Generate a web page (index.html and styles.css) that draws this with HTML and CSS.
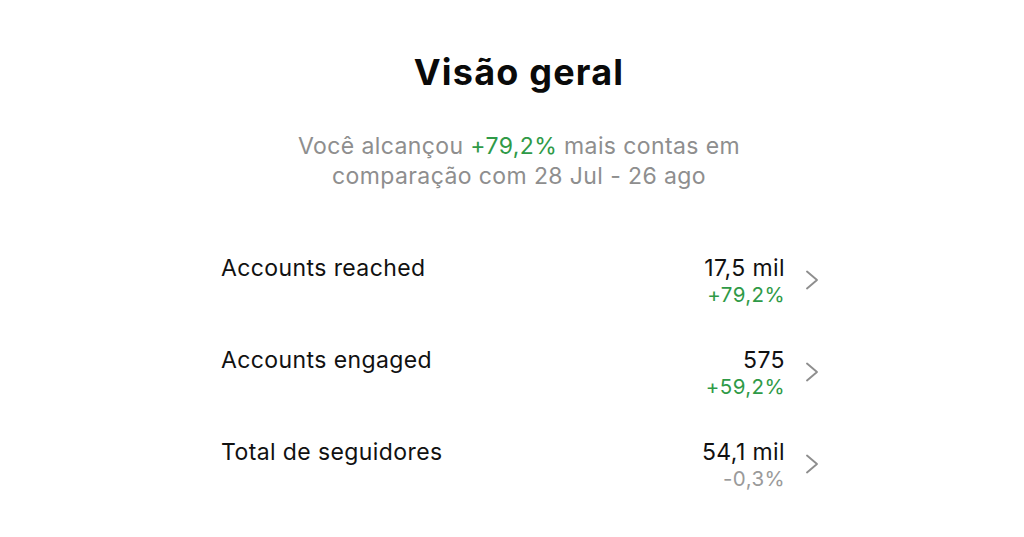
FILE: index.html
```html
<!DOCTYPE html>
<html lang="pt">
<head>
<meta charset="utf-8">
<link rel="stylesheet" href="styles.css">
</head>
<body>
<main class="page">
  <h1 class="title">Visão geral</h1>
  <p class="subtitle">Você alcançou <span class="up">+79,2%</span> mais contas em<br>comparação com 28 Jul - 26 ago</p>
  <ul class="list">
    <li class="row">
      <span class="label">Accounts reached</span>
      <span class="vals"><span class="value">17,5 mil</span><span class="delta up">+79,2%</span></span>
      <svg class="chev" viewBox="0 0 14 20" width="14" height="20"><path d="M2 1.5 L12 10 L2 18.5" fill="none" stroke="#8e8e8e" stroke-width="1.9" stroke-linecap="round" stroke-linejoin="round"/></svg>
    </li>
    <li class="row">
      <span class="label">Accounts engaged</span>
      <span class="vals"><span class="value">575</span><span class="delta up">+59,2%</span></span>
      <svg class="chev" viewBox="0 0 14 20" width="14" height="20"><path d="M2 1.5 L12 10 L2 18.5" fill="none" stroke="#8e8e8e" stroke-width="1.9" stroke-linecap="round" stroke-linejoin="round"/></svg>
    </li>
    <li class="row">
      <span class="label">Total de seguidores</span>
      <span class="vals"><span class="value">54,1 mil</span><span class="delta down">-0,3%</span></span>
      <svg class="chev" viewBox="0 0 14 20" width="14" height="20"><path d="M2 1.5 L12 10 L2 18.5" fill="none" stroke="#8e8e8e" stroke-width="1.9" stroke-linecap="round" stroke-linejoin="round"/></svg>
    </li>
  </ul>
</main>
</body>
</html>
```
FILE: styles.css
```css
* { box-sizing: border-box; }
html, body { margin: 0; padding: 0; background: #fff; }
body { font-family: Inter, "Liberation Sans", sans-serif; color: #111; }
.page { width: 1024px; height: 537px; display: flex; flex-direction: column; align-items: center; padding: 50px 0 0 14px; }
.title { margin: 0; font-size: 36px; font-weight: 700; line-height: 44px; letter-spacing: 1.2px; color: #0a0a0a; }
.subtitle { margin: 37px 0 0; font-size: 23px; line-height: 30px; letter-spacing: 0.4px; text-align: center; color: #8e8e8e; }
.up { color: #2f9a47; }
.down { color: #9a9a9a; }
.list { list-style: none; margin: 64px 0 0 2px; padding: 0; width: 598px; display: flex; flex-direction: column; gap: 44px; }
.row { display: flex; align-items: flex-start; height: 48px; letter-spacing: 0.4px; }
.label { flex: 1; font-size: 23px; line-height: 26px; }
.vals { display: flex; flex-direction: column; align-items: flex-end; }
.value { font-size: 23px; line-height: 26px; }
.delta { font-size: 20.5px; line-height: 22px; margin-top: 3px; }
.chev { margin: 15px 0 0 20px; flex: none; }
```
